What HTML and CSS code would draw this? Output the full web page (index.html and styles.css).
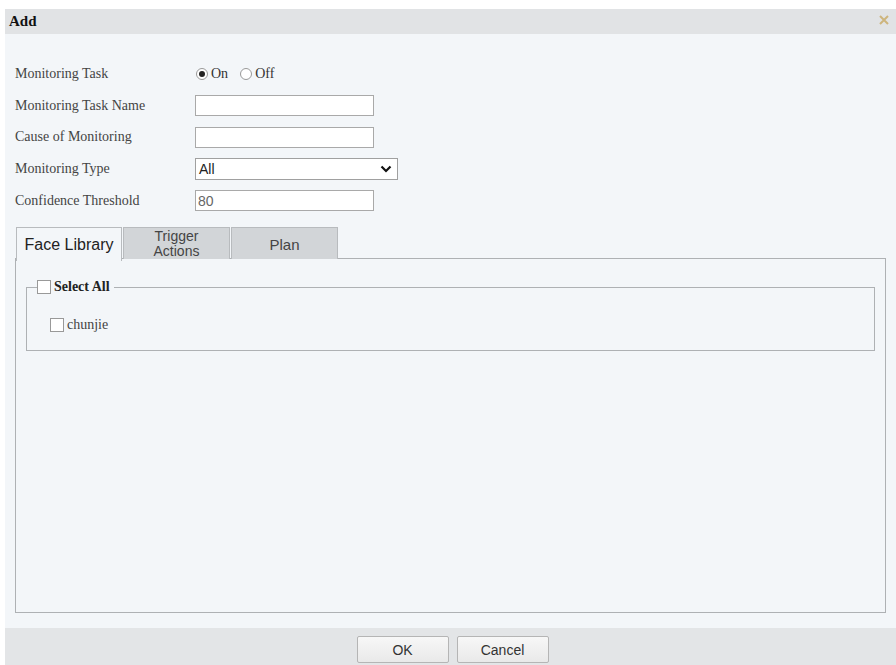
FILE: index.html
```html
<!DOCTYPE html>
<html lang="en">
<head>
  <meta charset="UTF-8">
  <title>Add</title>
  <link rel="stylesheet" href="styles.css">
</head>
<body>

  <div class="dialog">
    <div class="dialog-title">
      <span>Add</span>
      <svg class="close" width="10" height="10" viewBox="0 0 10 10"><path d="M1 1 L9 9 M9 1 L1 9" stroke="#cdb57c" stroke-width="2"/></svg>
    </div>

    <div class="dialog-body">
      <div class="row">
        <label>Monitoring Task</label>
        <div class="radios">
          <span class="radio checked"></span><span>On</span>
          <span class="radio"></span><span>Off</span>
        </div>
      </div>
      <div class="row">
        <label>Monitoring Task Name</label>
        <input type="text" class="field">
      </div>
      <div class="row">
        <label>Cause of Monitoring</label>
        <input type="text" class="field">
      </div>
      <div class="row">
        <label>Monitoring Type</label>
        <div class="select">
          <span>All</span>
          <svg width="12" height="8" viewBox="0 0 12 8"><path d="M1.5 1.5 L6 6 L10.5 1.5" fill="none" stroke="#111" stroke-width="2.2"/></svg>
        </div>
      </div>
      <div class="row">
        <label>Confidence Threshold</label>
        <input type="text" class="field num" value="80">
      </div>

      <div class="tabs">
        <div class="tab active">Face Library</div>
        <div class="tab two-line">Trigger<br>Actions</div>
        <div class="tab">Plan</div>
      </div>
      <div class="tab-panel">
        <fieldset class="libs">
          <legend><span class="check"></span>Select All</legend>
          <div class="lib-item"><span class="check"></span>chunjie</div>
        </fieldset>
      </div>
    </div>

    <div class="dialog-footer">
      <button>OK</button>
      <button>Cancel</button>
    </div>
  </div>

</body>
</html>
```

FILE: styles.css
```css
body {
  margin: 0;
  background-color: #fff;
  font-family: "Liberation Serif", serif;
  color: #333;
}
.dialog {
  margin: 9px 0 0 5px;
  height: 656px;
  display: flex;
  flex-direction: column;
  background-color: #f3f6f9;
}
.dialog-title {
  height: 25px;
  background-color: #e1e3e5;
  display: flex;
  align-items: center;
  justify-content: space-between;
  padding: 0 7px 0 4px;
  font-size: 15px;
  font-weight: bold;
  color: #111;
}
.close {
  margin-top: -4px;
}
.dialog-body {
  flex: 1;
  padding: 24px 5px 12px 10px;
}
.row {
  display: flex;
  align-items: center;
  height: 31.7px;
}
.row label {
  width: 180px;
  font-size: 14px;
  color: #444;
}
.radios {
  display: flex;
  align-items: center;
  font-size: 14px;
  color: #333;
  margin-left: 1px;
}
.radio {
  width: 10px;
  height: 10px;
  border: 1px solid #999;
  border-radius: 50%;
  background: #fff;
  margin-right: 3px;
  position: relative;
}
.radio.checked::after {
  content: "";
  position: absolute;
  left: 2px;
  top: 2px;
  width: 6px;
  height: 6px;
  border-radius: 50%;
  background: #222;
}
.radios span + .radio {
  margin-left: 12px;
}
.field {
  width: 179px;
  height: 21px;
  box-sizing: border-box;
  border: 1px solid #a9a9a9;
  background: #fff;
  margin: 0;
  padding: 0 2px;
  font-family: "Liberation Sans", sans-serif;
  font-size: 14px;
  color: #666;
}
.select {
  width: 203px;
  height: 22px;
  box-sizing: border-box;
  border: 1px solid #a0a0a0;
  background: #fff;
  display: flex;
  align-items: center;
  justify-content: space-between;
  padding: 0 5px 0 3px;
  font-family: "Liberation Sans", sans-serif;
  font-size: 14px;
  color: #222;
}
.tabs {
  display: flex;
  margin: 11px 0 0 1px;
  height: 31px;
  font-family: "Liberation Sans", sans-serif;
  font-size: 15px;
}
.tab {
  width: 107px;
  height: 32px;
  box-sizing: border-box;
  border: 1px solid #b8bbbe;
  border-bottom: none;
  background-color: #d2d5d8;
  text-align: center;
  line-height: 16px;
  color: #444;
  margin-right: 1px;
  padding-top: 9px;
}
.tab.two-line {
  padding-top: 1px;
  font-size: 14px;
  line-height: 15px;
}
.tab.active {
  width: 106px;
  height: 34px;
  background-color: #f3f6f9;
  position: relative;
  z-index: 1;
  color: #222;
  font-size: 16px;
}
.tab-panel {
  height: 355px;
  width: 871px;
  box-sizing: border-box;
  border: 1px solid #aeb1b4;
  padding: 20px 10px;
}
.libs {
  margin: 0;
  padding: 22px 20px 17px 10px;
  border: 1px solid #aeb1b4;
}
.libs legend {
  padding: 0 4px 0 0;
  font-size: 14px;
  font-weight: bold;
  color: #222;
  display: flex;
  align-items: center;
}
.check {
  display: inline-block;
  width: 14px;
  height: 14px;
  box-sizing: border-box;
  border: 1px solid #999;
  background: #fff;
  margin-right: 3px;
}
.lib-item {
  display: flex;
  align-items: center;
  margin-left: 13px;
  font-size: 14px;
  color: #444;
}
.dialog-footer {
  height: 37px;
  background-color: #e3e5e7;
  display: flex;
  justify-content: center;
  align-items: center;
  gap: 8px;
  padding-left: 4px;
}
.dialog-footer button {
  width: 92px;
  height: 27px;
  margin-top: 6px;
  background: linear-gradient(#f7f7f7, #e9e9e9);
  border: 1px solid #b5b5b5;
  border-radius: 2px;
  font-family: "Liberation Sans", sans-serif;
  font-size: 14px;
  color: #333;
}
```
